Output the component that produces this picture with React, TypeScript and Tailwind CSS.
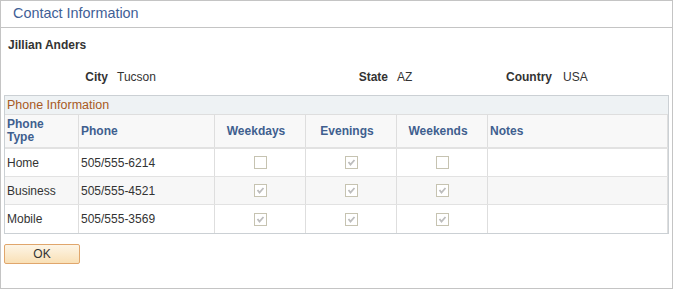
import React from 'react';

// ============= Types =============
interface PhoneRow {
  type: string;
  phone: string;
  weekdays: boolean;
  evenings: boolean;
  weekends: boolean;
  notes: string;
}

// ============= Data =============
const PHONES: PhoneRow[] = [
  { type: 'Home', phone: '505/555-6214', weekdays: false, evenings: true, weekends: false, notes: '' },
  { type: 'Business', phone: '505/555-4521', weekdays: true, evenings: true, weekends: true, notes: '' },
  { type: 'Mobile', phone: '505/555-3569', weekdays: true, evenings: true, weekends: true, notes: '' },
];

const GRID = 'grid grid-cols-[74px_136px_91px_91px_91px_180px]';

// ============= Components =============
const Check = ({ checked }: { checked: boolean }) => (
  <div className="w-[13px] h-[13px] border border-[#c6c3b1] bg-white flex items-center justify-center">
    {checked && (
      <svg width="11" height="11" viewBox="0 0 11 11">
        <polyline points="2.5,5 4.5,7.5 8.5,3" fill="none" stroke="#bdbdbd" strokeWidth="1.8" />
      </svg>
    )}
  </div>
);

const HeadCell = ({ children, center }: { children: React.ReactNode; center?: boolean }) => (
  <div
    className={`border-r border-[#dedede] flex items-center font-bold text-[#3f5f8f] leading-[13px] ${
      center ? 'justify-center pl-[2px] pr-[10px]' : 'px-[2px]'
    }`}
  >
    {children}
  </div>
);

// ============= Main Component =============
export default function App() {
  return (
    <div
      className="w-[673px] h-[289px] border border-[#c4c4c4] bg-white text-[12px] text-[#333]"
      style={{ fontFamily: '"Liberation Sans", Arial, sans-serif' }}
    >
      {/* Title bar */}
      <div className="h-[27px] border-b border-[#c4c4c4] flex items-center pl-[12px] text-[14.4px] text-[#3f6096]">
        Contact Information
      </div>

      <div className="mt-[10px] pl-[7px] h-[14px] leading-[14px] font-bold">Jillian Anders</div>

      {/* Address row */}
      <div className="mt-[18px] h-[14px] leading-[14px] flex">
        <div className="w-[107px] text-right font-bold">City</div>
        <div className="ml-[9px] w-[150px]">Tucson</div>
        <div className="w-[121px] text-right font-bold">State</div>
        <div className="ml-[9px] w-[100px]">AZ</div>
        <div className="w-[55px] text-right font-bold">Country</div>
        <div className="ml-[11px]">USA</div>
      </div>

      {/* Phone Information group */}
      <div className="mt-[11px] ml-[3px] w-[665px] border border-[#cbd0d4]">
        <div className="h-[19px] border-b border-[#dedede] bg-[#eef2f4] flex items-center pl-[2px] text-[12.5px] text-[#a85a24]">
          Phone Information
        </div>

        <div className={`${GRID} h-[34px] border-b-2 border-[#e2e2e2] bg-[#f8f8f8]`}>
          <HeadCell>
            Phone
            <br />
            Type
          </HeadCell>
          <HeadCell>Phone</HeadCell>
          <HeadCell center>Weekdays</HeadCell>
          <HeadCell center>Evenings</HeadCell>
          <HeadCell center>Weekends</HeadCell>
          <HeadCell>Notes</HeadCell>
        </div>

        {PHONES.map((row, i) => (
          <div
            key={row.type}
            className={`${GRID} h-[28px] border-b border-[#e2e2e2] last:border-b-0 ${
              i % 2 === 1 ? 'bg-[#f7f7f7]' : 'bg-white'
            }`}
          >
            <div className="border-r border-[#dedede] flex items-center px-[2px]">{row.type}</div>
            <div className="border-r border-[#dedede] flex items-center px-[2px]">{row.phone}</div>
            <div className="border-r border-[#dedede] flex items-center justify-center">
              <Check checked={row.weekdays} />
            </div>
            <div className="border-r border-[#dedede] flex items-center justify-center">
              <Check checked={row.evenings} />
            </div>
            <div className="border-r border-[#dedede] flex items-center justify-center">
              <Check checked={row.weekends} />
            </div>
            <div className="border-r border-[#dedede] flex items-center px-[2px]">{row.notes}</div>
          </div>
        ))}
      </div>

      <button className="mt-[10px] ml-[3px] w-[76px] h-[20px] border border-[#e0a66c] rounded-[2px] bg-gradient-to-b from-[#fdf5e6] to-[#f9e0b6] text-[12px] text-[#333] leading-[18px]">
        OK
      </button>
    </div>
  );
}
